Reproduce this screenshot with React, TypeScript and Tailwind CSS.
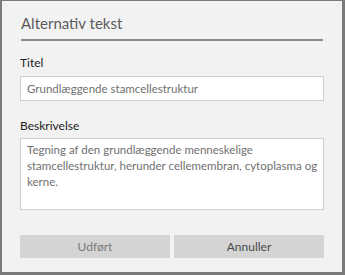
import React from 'react';

export default function App() {
  return (
    <div
      className="w-[345px] h-[275px] bg-[#f2f2f2] border-l-2 border-r-[3px] border-b-[3px] border-t border-[#7a7a7a] flex flex-col px-[18px]"
      style={{ fontFamily: 'Lato, "Noto Sans", sans-serif' }}
    >
      <div className="pt-[13px] pb-[6px] border-b-2 border-[#8a8a8a] mx-[1px]">
        <h1 className="text-[15px] leading-[19px] text-[#5a5a5a]">Alternativ tekst</h1>
      </div>

      <label className="mt-[14px] text-[12px] leading-[16px] text-[#222222]">Titel</label>
      <input
        className="mt-[5px] h-[25px] bg-white border border-[#cfcfcf] px-[6px] text-[11.5px] text-[#707070] outline-none"
        defaultValue="Grundlæggende stamcellestruktur"
      />

      <label className="mt-[17px] text-[12px] leading-[16px] text-[#222222]">Beskrivelse</label>
      <textarea
        className="mt-[4px] h-[72px] resize-none overflow-hidden bg-white border border-[#cfcfcf] pl-[6px] pr-[1px] py-[3px] text-[11.5px] leading-[16px] text-[#707070] outline-none"
        defaultValue="Tegning af den grundlæggende menneskelige stamcellestruktur, herunder cellemembran, cytoplasma og kerne."
      />

      <div className="mt-[25px] flex gap-[4px]">
        <button className="flex-1 h-[23px] bg-[#d4d4d4] text-[12px] text-[#7a7a7a]">Udført</button>
        <button className="flex-1 h-[23px] bg-[#d4d4d4] text-[12px] text-[#4a4a4a]">Annuller</button>
      </div>
    </div>
  );
}
